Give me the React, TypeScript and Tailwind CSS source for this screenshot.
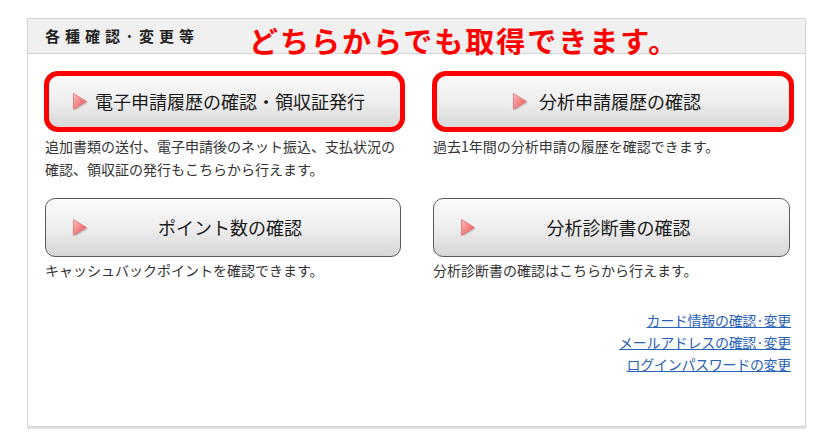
import React from "react";

const jp = { fontFamily: '"Noto Sans CJK JP", "Noto Sans", sans-serif' };

function Tri() {
  return (
    <svg width="18" height="20" viewBox="0 0 18 20" className="shrink-0">
      <defs>
        <linearGradient id="tg" x1="0" y1="0" x2="1" y2="1">
          <stop offset="0" stopColor="#ffc0c0" />
          <stop offset="1" stopColor="#e64848" />
        </linearGradient>
      </defs>
      <path d="M3.5 3.5 L16 11 L3.5 18.5 Z" fill="#000" opacity="0.15" />
      <path d="M1.5 1.5 L14.5 9.5 L1.5 17.5 Z" fill="url(#tg)" stroke="#e07070" strokeWidth="0.8" />
    </svg>
  );
}

function Btn({ label, red, inline }: { label: string; red?: boolean; inline?: boolean }) {
  return (
    <div className="relative h-[59px]">
      <div className="relative h-full rounded-[10px] border border-[#5a5a5a] bg-gradient-to-b from-[#fbfbfb] via-[#eeeeee] to-[#d6d6d6] shadow-[inset_0_1px_0_#ffffff]">
        {inline ? (
          <div className="flex h-full items-center justify-center gap-[9px] pr-[10px]">
            <Tri />
            <span className="text-[18px] text-[#1a1a1a]">{label}</span>
          </div>
        ) : (
          <>
            <div className="absolute left-[26px] top-1/2 -translate-y-1/2">
              <Tri />
            </div>
            <div className="flex h-full items-center justify-center pl-[14px]">
              <span className="text-[18px] text-[#1a1a1a]">{label}</span>
            </div>
          </>
        )}
      </div>
      {red && (
        <div className="pointer-events-none absolute -left-[1px] -right-[4px] -top-[1px] -bottom-[1px] rounded-[14px] border-[5px] border-[#ff0000]" />
      )}
    </div>
  );
}

export default function App() {
  return (
    <div className="h-[443px] w-[836px] bg-white pl-[27px] pt-[18px]" style={jp}>
      <div className="relative h-[409px] w-[779px] border border-[#d4d4d4] shadow-[0_2px_0_#e2e2e2]">
        <div className="flex h-[35px] items-center border-b border-[#d4d4d4] bg-[#f0f0f0] pl-[17px]">
          <span className="text-[15px] font-bold tracking-[5px] text-[#222]">各種確認·変更等</span>
        </div>
        <div className="absolute left-[221px] top-[7px] text-[29px] font-bold leading-none tracking-[2px] text-[#ff0000]">
          どちらからでも取得できます。
        </div>
        <div className="grid grid-cols-[356px_357px] gap-x-[32px] pl-[17px] pt-[18px]">
          <div>
            <Btn label="電子申請履歴の確認・領収証発行" red />
            <p className="mt-[4px] text-[14px] leading-[23px] text-[#333]">
              追加書類の送付、電子申請後のネット振込、支払状況の
              <br />
              確認、領収証の発行もこちらから行えます。
            </p>
          </div>
          <div>
            <Btn label="分析申請履歴の確認" red inline />
            <p className="mt-[4px] text-[14px] leading-[23px] text-[#333]">過去1年間の分析申請の履歴を確認できます。</p>
          </div>
          <div className="mt-[17px]">
            <Btn label="ポイント数の確認" />
            <p className="mt-[2px] text-[14px] leading-[23px] text-[#333]">キャッシュバックポイントを確認できます。</p>
          </div>
          <div className="mt-[17px]">
            <Btn label="分析診断書の確認" />
            <p className="mt-[2px] text-[14px] leading-[23px] text-[#333]">分析診断書の確認はこちらから行えます。</p>
          </div>
        </div>
        <div className="mt-[27px] flex flex-col items-end pr-[14px] text-[14px] leading-[22px] tracking-[-0.3px]">
          <a href="#" className="text-[#2a62b8] underline">カード情報の確認·変更</a>
          <a href="#" className="text-[#2a62b8] underline">メールアドレスの確認·変更</a>
          <a href="#" className="text-[#2a62b8] underline">ログインパスワードの変更</a>
        </div>
      </div>
    </div>
  );
}
